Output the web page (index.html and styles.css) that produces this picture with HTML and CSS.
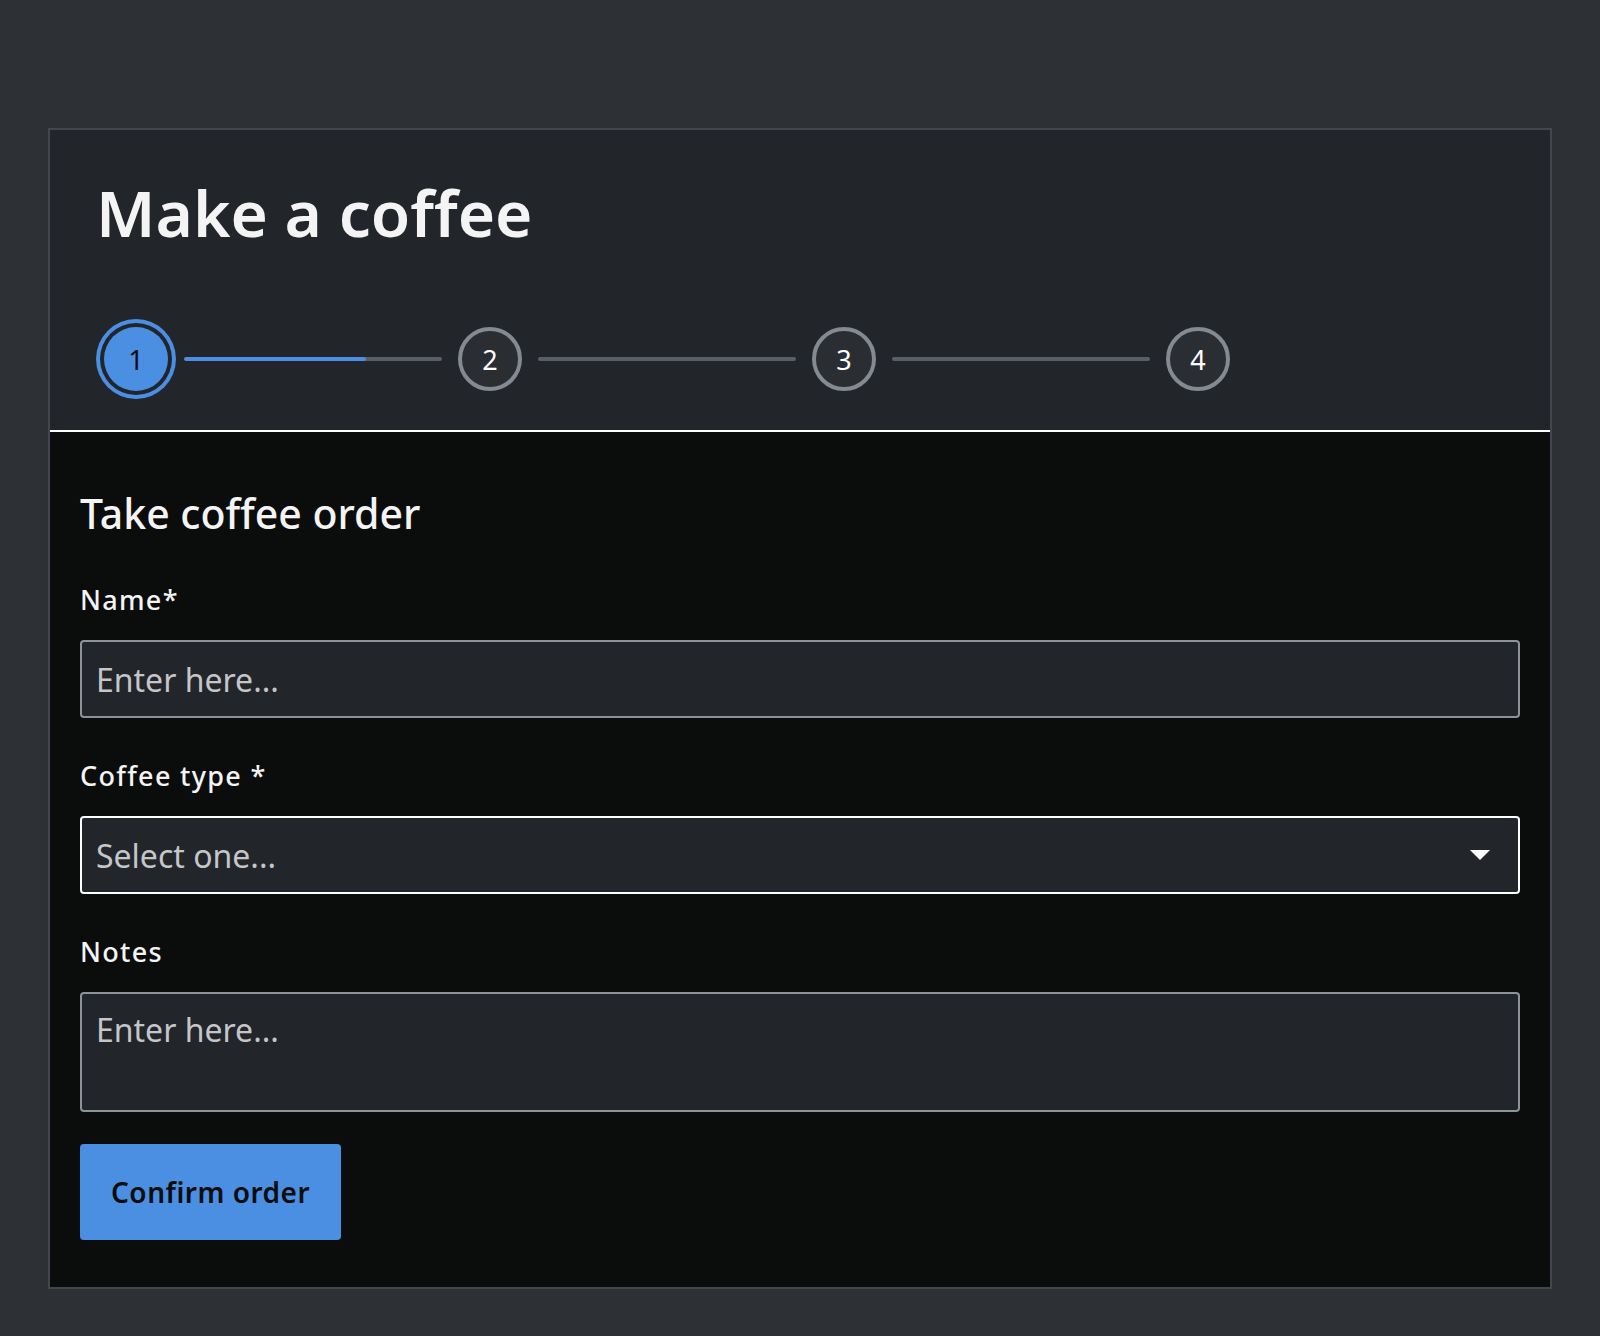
FILE: index.html
```html
<!DOCTYPE html>
<html lang="en">
<head>
<meta charset="utf-8">
<title>Make a coffee</title>
<link rel="stylesheet" href="styles.css">
</head>
<body>
  <main class="card">
    <header class="card-header">
      <h1 class="title">Make a coffee</h1>
      <ol class="stepper">
        <li class="step step-active">1</li>
        <li class="track"><span class="track-fill" style="width: 70.5%"></span></li>
        <li class="step">2</li>
        <li class="track"></li>
        <li class="step">3</li>
        <li class="track"></li>
        <li class="step">4</li>
      </ol>
    </header>
    <section class="card-body">
      <h2 class="section-title">Take coffee order</h2>
      <form class="form">
        <label class="field">
          <span class="field-label">Name*</span>
          <input class="control" type="text" placeholder="Enter here...">
        </label>
        <label class="field">
          <span class="field-label">Coffee type *</span>
          <span class="select-wrap">
            <select class="control control-select">
              <option>Select one...</option>
            </select>
            <svg class="select-arrow" width="20" height="10" viewBox="0 0 20 10"><path d="M0 0 L20 0 L10 10 Z" fill="#ffffff"/></svg>
          </span>
        </label>
        <label class="field">
          <span class="field-label">Notes</span>
          <textarea class="control control-area" placeholder="Enter here..."></textarea>
        </label>
        <div class="actions">
          <button class="btn" type="button">Confirm order</button>
        </div>
      </form>
    </section>
  </main>
</body>
</html>
```
FILE: styles.css
```css
* { box-sizing: border-box; }

html, body {
  margin: 0;
  padding: 0;
  background: #2d3035;
}

body {
  font-family: "Noto Sans", "Open Sans", sans-serif;
  color: #f4f4f4;
  padding: 128px 48px 48px 48px;
}

.card {
  border: 2px solid #43464c;
  background: #0b0c0c;
}

.card-header {
  background: #222529;
  border-bottom: 2px solid #ffffff;
  padding: 51px 48px 39px 48px;
}

.title {
  margin: 0 0 0 -2px;
  font-size: 64px;
  line-height: 1;
  font-weight: 600;
  color: #f4f4f4;
}

.stepper {
  list-style: none;
  margin: 82px 0 0 0;
  padding: 0 0 0 6px;
  display: flex;
  align-items: center;
}

.step {
  width: 64px;
  height: 64px;
  flex: 0 0 64px;
  border-radius: 50%;
  border: 4px solid #858990;
  background: #2a2d32;
  color: #ffffff;
  display: flex;
  align-items: center;
  justify-content: center;
  font-size: 27px;
  line-height: 1;
}

.step-active {
  background: #4a8fe2;
  border: none;
  color: #0b0c0c;
  box-shadow: 0 0 0 4px #222529, 0 0 0 8px #4a8fe2;
}

.track {
  flex: 0 0 258px;
  height: 4px;
  margin: 0 16px;
  border-radius: 2px;
  background: #5a5f67;
  position: relative;
  overflow: hidden;
}

.track-fill {
  display: block;
  height: 100%;
  background: #4a8fe2;
  border-radius: 2px;
}

.card-body {
  padding: 61px 30px 47px 30px;
}

.section-title {
  margin: 0;
  font-size: 41px;
  line-height: 1;
  font-weight: 500;
  color: #f4f4f4;
}

.form {
  display: flex;
  flex-direction: column;
  margin-top: 52px;
}

.field {
  display: flex;
  flex-direction: column;
  margin-bottom: 44px;
}

.field-label {
  font-size: 27px;
  line-height: 1;
  font-weight: 500;
  letter-spacing: 1.3px;
  color: #f4f4f4;
  margin-bottom: 27px;
}

.control {
  display: block;
  width: 100%;
  height: 78px;
  margin: 0;
  padding: 0 14px;
  background: #222529;
  border: 2px solid #8e9299;
  border-radius: 4px;
  color: #f4f4f4;
  font-family: "Noto Sans", "Open Sans", sans-serif;
  font-size: 32px;
  outline: none;
}

.control::placeholder {
  color: #c4c6c9;
  opacity: 1;
}

.select-wrap {
  position: relative;
  display: block;
}

.control-select {
  appearance: none;
  -webkit-appearance: none;
  border-color: #ffffff;
  color: #c4c6c9;
}

.select-arrow {
  position: absolute;
  right: 30px;
  top: 34px;
  pointer-events: none;
}

.control-area {
  height: 120px;
  padding: 14px 14px;
  resize: none;
  line-height: 1.4;
}

.actions {
  margin-top: -12px;
}

.btn {
  height: 96px;
  padding: 0 31px;
  background: #4a8fe2;
  border: none;
  border-radius: 4px;
  color: #0b0c0c;
  font-family: "Noto Sans", "Open Sans", sans-serif;
  font-size: 28px;
  font-weight: 600;
  letter-spacing: 0.5px;
}
```
